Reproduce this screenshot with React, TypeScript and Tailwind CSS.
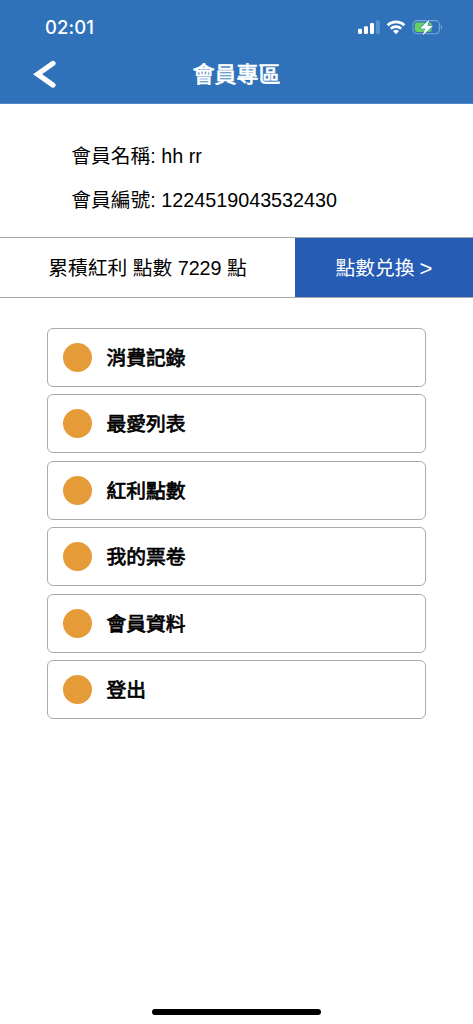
import React from 'react';

const items: string[] = ['消費記錄', '最愛列表', '紅利點數', '我的票卷', '會員資料', '登出'];

function StatusBar() {
  return (
    <div className="flex h-[54px] items-center justify-between pl-[45px] pr-[30px] text-white">
      <span className="whitespace-nowrap font-['Inter',sans-serif] text-[18.5px] font-medium leading-[24px] tracking-[0.1px]">
        02:01
      </span>
      <svg width="86" height="20" viewBox="0 0 86 20" fill="none" aria-hidden="true">
        <g fill="#fff">
          <rect x="1" y="11.7" width="4" height="5.2" rx="1.1" />
          <rect x="7" y="9.2" width="4" height="7.7" rx="1.1" />
          <rect x="13" y="6.1" width="4" height="10.8" rx="1.1" />
          <rect x="18.8" y="3.2" width="4" height="13.7" rx="1.1" fill="#5394cd" />
        </g>
        <g stroke="#fff" strokeWidth="2.7">
          <path d="M30.6 8.3a12.2 12.2 0 0 1 16.8 0" />
          <path d="M33.8 11.7a7.6 7.6 0 0 1 10.4 0" />
        </g>
        <path d="M39 17.2l-2.9-3a4.2 4.2 0 0 1 5.8 0z" fill="#fff" />
        <rect x="56" y="3.6" width="26.4" height="13.2" rx="4" stroke="#76a7d8" strokeWidth="1.1" />
        <path d="M83.9 7.9c1.8.6 1.8 3.8 0 4.4z" fill="#76a7d8" />
        <rect x="57.8" y="5.4" width="17" height="9.6" rx="2.4" fill="#65d15f" />
        <path
          d="M71.8 3.3L63.6 11.3h5l-2.4 6.4 9.2-8.6h-5.2z"
          fill="#fff"
          stroke="#3072b9"
          strokeWidth="1.6"
          strokeLinejoin="round"
          paintOrder="stroke"
        />
        <path
          d="M71.8 3.3L63.6 11.3h5l-2.4 6.4 9.2-8.6h-5.2z"
          fill="#fff"
          stroke="#fff"
          strokeWidth="0.4"
          strokeLinejoin="round"
        />
      </svg>
    </div>
  );
}

function Header() {
  return (
    <header className="h-[104px] border-b border-[#5189c6] bg-[#3072b9]">
      <StatusBar />
      <div className="grid h-[42px] grid-cols-[72px_1fr_72px] items-center">
        <button type="button" aria-label="返回" className="pl-[33px]">
          <svg width="24" height="30" viewBox="0 0 24 30" fill="none" aria-hidden="true">
            <path
              d="M20 3.4L4.6 14.2l15.4 10.9"
              stroke="#fff"
              strokeWidth="5.2"
              strokeLinecap="round"
              strokeLinejoin="miter"
            />
          </svg>
        </button>
        <h1 className="whitespace-nowrap text-center text-[21.9px] font-normal leading-[30px] text-white [-webkit-text-stroke:0.7px_currentColor]">
          會員專區
        </h1>
      </div>
    </header>
  );
}

export default function App() {
  return (
    <div className="flex h-[1024px] w-full flex-col bg-white font-['Liberation_Sans','Noto_Sans_CJK_TC',sans-serif] text-[19.75px] text-black">
      <Header />
      <section className="flex flex-col gap-[14px] pl-[71.3px] pt-[37px] leading-[30px]">
        <p className="whitespace-nowrap">會員名稱: hh rr</p>
        <p className="whitespace-nowrap">會員編號: 1224519043532430</p>
      </section>
      <section className="mt-[22px] flex h-[61px] border-y border-[#a8a8a8]">
        <div className="flex w-[295px] items-center justify-center whitespace-nowrap leading-[30px]">
          累積紅利 點數 7229 點
        </div>
        <button
          type="button"
          className="flex flex-1 items-center justify-center gap-[5px] whitespace-nowrap bg-[#265cb4] leading-[30px] text-white"
        >
          <span>點數兑換</span>
          <span className="pt-[2px] text-[22px]">&gt;</span>
        </button>
      </section>
      <nav className="ml-[47px] mt-[30px] flex w-[378.5px] flex-col gap-[7.6px]">
        {items.map((label) => (
          <button
            key={label}
            type="button"
            className="flex h-[58.9px] shrink-0 items-center gap-[15px] rounded-[6px] border border-[#ababab] pl-[14.5px] text-left leading-[30px]"
          >
            <span className="size-[29px] rounded-full bg-[#e59c38]" />
            <span className="pt-px [-webkit-text-stroke:0.75px_currentColor]">{label}</span>
          </button>
        ))}
      </nav>
      <div className="mx-auto mb-[9px] mt-auto h-[6px] w-[169px] rounded-full bg-black" />
    </div>
  );
}
